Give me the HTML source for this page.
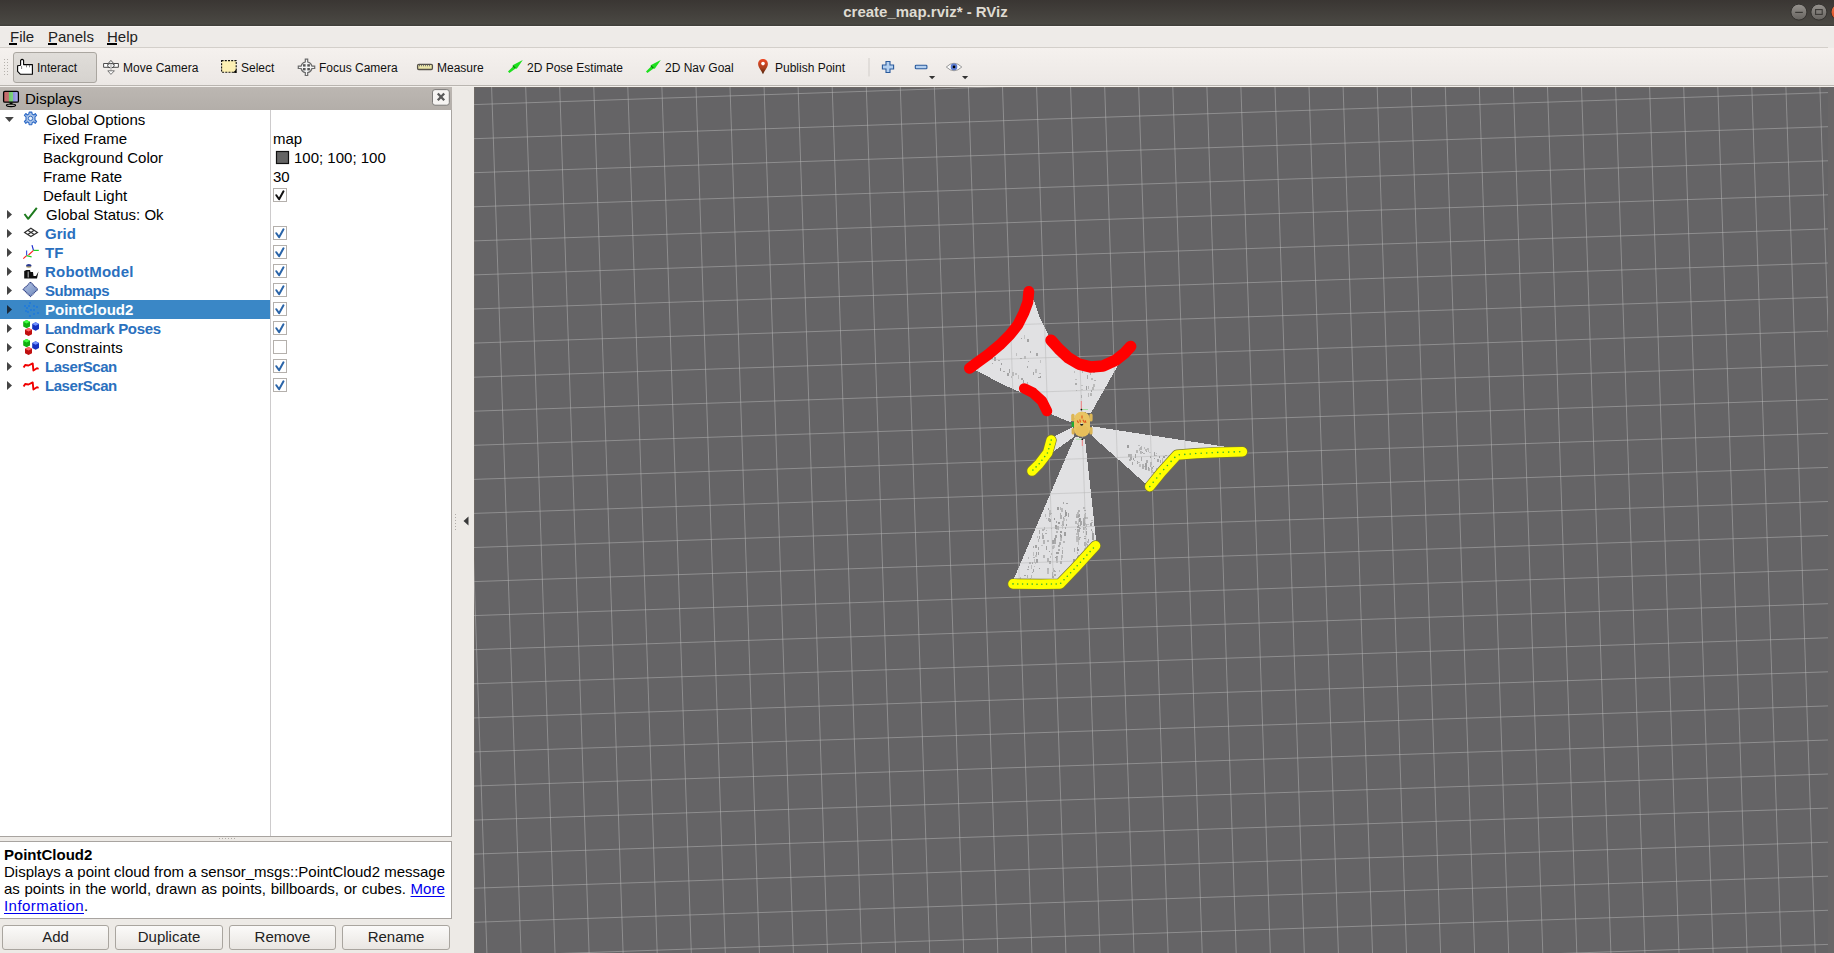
<!DOCTYPE html>
<html><head><meta charset="utf-8">
<style>
*{margin:0;padding:0;box-sizing:border-box}
html,body{width:1834px;height:953px;overflow:hidden;background:#edeae6;font-family:"Liberation Sans",sans-serif;color:#000}
.abs{position:absolute}
#title{left:0;top:0;width:1834px;height:26px;background:linear-gradient(#3a3633,#4a4843 92%,#3e3d39)}
#title .t{position:absolute;left:0;width:1851px;top:3.3px;text-align:center;font-weight:bold;font-size:15px;color:#dfdbd2}
#menubar{left:0;top:26px;width:1834px;height:22px;background:#eeebe8}
.menu{position:absolute;top:28px;font-size:15px;color:#222}
.menu u{text-decoration:none}
#toolbar{left:0;top:48px;width:1834px;height:37px;background:linear-gradient(#f5f1ee,#ece8e5)}
.tl{position:absolute;top:61px;font-size:12px;color:#111;white-space:nowrap}
#dock{left:0;top:87px;width:452px;height:866px;background:#edeae6}
#dhead{left:0;top:87px;width:452px;height:23px;background:linear-gradient(#bcb7b2,#b3aea9)}
#tree{left:0;top:110px;width:452px;height:727px;background:#fff;border-right:1px solid #a8a4a0;border-bottom:1px solid #a8a4a0}
.row{position:absolute;left:0;height:19px;font-size:15px;white-space:nowrap}
.row span{position:absolute;top:1px}
.b{font-weight:bold;color:#2a70be}
#view{left:474px;top:87px;width:1360px;height:866px;background:#656466;border-left:1.5px solid #706b67;border-top:1px solid #6d6865}
.cb{position:absolute;left:273px;width:14px;height:14px;border:1px solid #b0aca8;background:#fff}
.btn{position:absolute;top:925px;height:25px;border:1px solid #a9a59f;border-radius:3px;background:linear-gradient(#fbfaf9,#e9e6e2);font-size:15px;text-align:center;line-height:22px;color:#222}
</style></head><body>
<div id="title" class="abs"><div class="t">create_map.rviz* - RViz</div></div>
<div id="menubar" class="abs"></div><div class="abs" style="left:0;top:26px;width:1834px;height:1px;background:#f8f5f2"></div>
<div class="menu" style="left:10px"><u>F</u>ile</div>
<div class="menu" style="left:48px"><u>P</u>anels</div>
<div class="menu" style="left:107px"><u>H</u>elp</div>
<div class="abs" style="left:0;top:47px;width:1828px;height:1px;background:#d3cfca"></div>
<div class="abs" style="left:9px;top:43px;width:8px;height:2px;background:#000"></div>
<div class="abs" style="left:48px;top:43px;width:9px;height:2px;background:#000"></div>
<div class="abs" style="left:107px;top:43px;width:9.5px;height:2px;background:#000"></div>
<div id="toolbar" class="abs"></div>
<div class="abs" style="left:0;top:85px;width:1834px;height:1px;background:#b9b5b0"></div><div class="abs" style="left:0;top:86px;width:1834px;height:1px;background:#f3f0ec"></div>
<div class="abs" style="left:12.5px;top:52px;width:84.5px;height:31px;border:1px solid #aaa6a0;border-radius:3px;background:linear-gradient(#e0ddd9,#d6d3cf)"></div>
<div class="tl" style="left:37px">Interact</div>
<div class="tl" style="left:123px">Move Camera</div>
<div class="tl" style="left:241px">Select</div>
<div class="tl" style="left:319px">Focus Camera</div>
<div class="tl" style="left:437px">Measure</div>
<div class="tl" style="left:527px">2D Pose Estimate</div>
<div class="tl" style="left:665px">2D Nav Goal</div>
<div class="tl" style="left:775px">Publish Point</div>

<div id="dock" class="abs"></div>
<div id="dhead" class="abs"></div>
<div class="abs" style="left:25px;top:90px;font-size:15px">Displays</div>
<div id="tree" class="abs"></div>
<div class="abs" style="left:270px;top:110px;width:1px;height:726px;background:#cdcbcc"></div>
<div class="abs" style="left:0;top:300px;width:270px;height:19px;background:#3a87c6"></div>

<div class="row" style="top:110px"><span style="left:46px">Global Options</span></div>
<div class="row" style="top:129px"><span style="left:43px">Fixed Frame</span><span style="left:273px">map</span></div>
<div class="row" style="top:148px"><span style="left:43px">Background Color</span><span style="left:294px">100; 100; 100</span></div>
<div class="row" style="top:167px"><span style="left:43px">Frame Rate</span><span style="left:273px">30</span></div>
<div class="row" style="top:186px"><span style="left:43px">Default Light</span></div>
<div class="row" style="top:205px"><span style="left:46px">Global Status: Ok</span></div>
<div class="row" style="top:224px"><span class="b" style="left:45px">Grid</span></div>
<div class="row" style="top:243px"><span class="b" style="left:45px">TF</span></div>
<div class="row" style="top:262px"><span class="b" style="left:45px;letter-spacing:0.2px">RobotModel</span></div>
<div class="row" style="top:281px"><span class="b" style="left:45px;letter-spacing:-0.5px">Submaps</span></div>
<div class="row" style="top:300px"><span class="b" style="left:45px;color:#fff">PointCloud2</span></div>
<div class="row" style="top:319px"><span class="b" style="left:45px;letter-spacing:-0.3px">Landmark Poses</span></div>
<div class="row" style="top:338px"><span style="left:45px;letter-spacing:0.2px">Constraints</span></div>
<div class="row" style="top:357px"><span class="b" style="left:45px;letter-spacing:-0.45px">LaserScan</span></div>
<div class="row" style="top:376px"><span class="b" style="left:45px;letter-spacing:-0.45px">LaserScan</span></div>

<div class="abs" style="left:0;top:841px;width:452px;height:78px;background:#fff;border:1px solid #a8a4a0;border-left:none"></div>
<div class="abs" style="left:4px;top:846px;font-size:15px;font-weight:bold">PointCloud2</div>
<div class="abs" style="left:4px;top:863px;font-size:15px;line-height:17px;white-space:nowrap">Displays a point cloud from a sensor_msgs::PointCloud2 message<br><span style="word-spacing:0.5px">as points in the world, drawn as points, billboards, or cubes. <u style="color:#0000ee;text-underline-offset:2px">More</u></span><br><u style="color:#0000ee;text-underline-offset:2px;letter-spacing:0.45px">Information</u>.</div>

<div class="btn" style="left:2px;width:107px">Add</div>
<div class="btn" style="left:115px;width:108px">Duplicate</div>
<div class="btn" style="left:229px;width:107px">Remove</div>
<div class="btn" style="left:342px;width:108px">Rename</div>

<div id="view" class="abs"></div>
<div class="abs" style="left:1828px;top:87px;width:6px;height:866px;background:#686667"></div>
<svg class="abs" style="left:0;top:0" width="1834" height="953">
<defs><clipPath id="vc"><rect x="474" y="87" width="1354" height="866"/></clipPath></defs>
<g clip-path="url(#vc)">
<g fill="#e1e1e3" stroke="none" shape-rendering="crispEdges">
<polygon points="1081,412 1070.5,422.2 1050.7,414.1 1047,411 1024,388 1019.8,392 1000,383.2 977,370.7 969.5,368.2 976.9,362.8 987.9,354.8 999.9,344.8 1009.8,334.9 1017.8,324.9 1023.8,312.9 1027.8,302 1028.8,291.5 1033.8,300 1040,318 1046,330 1051,340.2 1058.9,349 1068.3,357.8 1079,364.1 1090.4,366.9 1103,366 1115.6,360.3 1118.7,364 1091,413"/>
<polygon points="1092,426.3 1240,449 1242.4,451.7 1218.1,452.4 1196.1,453.5 1177,455 1161.6,471.9 1149.8,486.6 1144.7,482.9 1092,436"/>
<polygon points="1073,427 1053,437 1053,452 1074,437"/>
<polygon points="1075,436.4 1014.3,577.7 1013,583.9 1040.9,584.2 1060,583.9 1075,568.2 1095.5,545.7 1096.2,540.9 1085,439"/>
</g>

<g shape-rendering="crispEdges" opacity="0.6"><rect x="1025" y="385" width="1" height="1" fill="#aeaeae"/><rect x="1011" y="376" width="1" height="1.5" fill="#a0a0a0"/><rect x="1007" y="373" width="1.5" height="3" fill="#7d7d7d"/><rect x="1003" y="371" width="1.5" height="1" fill="#868686"/><rect x="1000" y="368" width="1" height="2.5" fill="#757575"/><rect x="992" y="363" width="1" height="1" fill="#858585"/><rect x="1040" y="376" width="1" height="2" fill="#757575"/><rect x="1039" y="373" width="2" height="1" fill="#a0a0a0"/><rect x="1035" y="369" width="1.5" height="4" fill="#a5a5a5"/><rect x="1028" y="361" width="1" height="1" fill="#8b8b8b"/><rect x="1024" y="356" width="1.5" height="3" fill="#a3a3a3"/><rect x="1030" y="351" width="1" height="1.5" fill="#7e7e7e"/><rect x="1021" y="338" width="1" height="1" fill="#7e7e7e"/><rect x="1040" y="360" width="1" height="2.5" fill="#afafaf"/><rect x="1036" y="353" width="2" height="3" fill="#808080"/><rect x="1027" y="339" width="2" height="3" fill="#7a7a7a"/><rect x="1024" y="335" width="1" height="4" fill="#aeaeae"/><rect x="1027" y="382" width="1" height="1.5" fill="#949494"/><rect x="1021" y="378" width="2" height="1.5" fill="#7f7f7f"/><rect x="1018" y="375" width="1" height="4" fill="#acacac"/><rect x="1015" y="373" width="2" height="2" fill="#a5a5a5"/><rect x="1001" y="363" width="1" height="1.5" fill="#767676"/><rect x="998" y="360" width="1.5" height="1" fill="#8f8f8f"/><rect x="994" y="357" width="2" height="4" fill="#7e7e7e"/><rect x="991" y="355" width="2" height="4" fill="#818181"/><rect x="1038" y="377" width="2" height="1" fill="#7d7d7d"/><rect x="1033" y="372" width="1" height="3" fill="#7e7e7e"/><rect x="1027" y="366" width="1" height="2" fill="#858585"/><rect x="1020" y="358" width="1.5" height="1" fill="#707070"/><rect x="1016" y="353" width="1" height="2.5" fill="#aaaaaa"/><rect x="1023" y="380" width="1" height="2.5" fill="#797979"/><rect x="1012" y="372" width="1.5" height="4" fill="#9f9f9f"/><rect x="1009" y="369" width="1" height="4" fill="#808080"/><rect x="1086" y="386" width="1" height="4" fill="#767676"/><rect x="1087" y="375" width="1" height="4" fill="#888888"/><rect x="1088" y="367" width="1" height="3" fill="#929292"/><rect x="1076" y="390" width="1" height="1" fill="#949494"/><rect x="1075" y="383" width="2" height="2" fill="#898989"/><rect x="1075" y="379" width="2" height="1" fill="#a9a9a9"/><rect x="1074" y="371" width="1" height="2" fill="#aaaaaa"/><rect x="1081" y="395" width="1" height="3" fill="#888888"/><rect x="1081" y="389" width="1.5" height="1" fill="#afafaf"/><rect x="1081" y="385" width="2" height="1" fill="#acacac"/><rect x="1082" y="371" width="1" height="2" fill="#989898"/><rect x="1088" y="386" width="1" height="2.5" fill="#9d9d9d"/><rect x="1090" y="373" width="1" height="1.5" fill="#929292"/><rect x="1088" y="393" width="1" height="4" fill="#a1a1a1"/><rect x="1091" y="378" width="1.5" height="2" fill="#a3a3a3"/><rect x="1093" y="370" width="1.5" height="2.5" fill="#8c8c8c"/><rect x="1094" y="367" width="1" height="1" fill="#838383"/><rect x="1090" y="393" width="2" height="2.5" fill="#989898"/><rect x="1091" y="390" width="1" height="2" fill="#797979"/><rect x="1092" y="387" width="1.5" height="3" fill="#9d9d9d"/><rect x="1093" y="384" width="2" height="2.5" fill="#a2a2a2"/><rect x="1094" y="380" width="1.5" height="1" fill="#909090"/><rect x="1086" y="517" width="2" height="2" fill="#a7a7a7"/><rect x="1087" y="524" width="2" height="1" fill="#aaaaaa"/><rect x="1088" y="539" width="1" height="4" fill="#818181"/><rect x="1088" y="547" width="1" height="1.5" fill="#737373"/><rect x="1091" y="520" width="1.5" height="1" fill="#a2a2a2"/><rect x="1092" y="533" width="1.5" height="4" fill="#727272"/><rect x="1084" y="510" width="2" height="1" fill="#808080"/><rect x="1084" y="514" width="1.5" height="4" fill="#a7a7a7"/><rect x="1084" y="517" width="1.5" height="1.5" fill="#838383"/><rect x="1084" y="523" width="1.5" height="2" fill="#9e9e9e"/><rect x="1084" y="527" width="1.5" height="1" fill="#787878"/><rect x="1084" y="536" width="2" height="1" fill="#959595"/><rect x="1085" y="544" width="1" height="4" fill="#aaaaaa"/><rect x="1085" y="552" width="2" height="1" fill="#727272"/><rect x="1085" y="556" width="1" height="3" fill="#868686"/><rect x="1049" y="510" width="2" height="2.5" fill="#aaaaaa"/><rect x="1046" y="518" width="1" height="1" fill="#adadad"/><rect x="1042" y="529" width="2" height="2" fill="#969696"/><rect x="1039" y="536" width="1" height="2.5" fill="#828282"/><rect x="1038" y="539" width="1" height="2.5" fill="#979797"/><rect x="1035" y="545" width="2" height="2.5" fill="#7a7a7a"/><rect x="1033" y="552" width="1" height="4" fill="#a8a8a8"/><rect x="1029" y="562" width="1.5" height="2" fill="#909090"/><rect x="1028" y="566" width="1" height="1.5" fill="#8d8d8d"/><rect x="1027" y="569" width="1.5" height="1" fill="#868686"/><rect x="1024" y="575" width="2" height="1" fill="#7a7a7a"/><rect x="1051" y="513" width="1" height="1" fill="#939393"/><rect x="1049" y="519" width="1.5" height="3" fill="#777777"/><rect x="1046" y="530" width="1" height="1" fill="#9a9a9a"/><rect x="1045" y="533" width="1.5" height="1" fill="#888888"/><rect x="1043" y="540" width="2" height="4" fill="#979797"/><rect x="1041" y="545" width="2" height="1" fill="#adadad"/><rect x="1038" y="552" width="1" height="2.5" fill="#797979"/><rect x="1036" y="559" width="1.5" height="4" fill="#747474"/><rect x="1035" y="562" width="1" height="2" fill="#a3a3a3"/><rect x="1034" y="566" width="1" height="1" fill="#a1a1a1"/><rect x="1033" y="569" width="1" height="2.5" fill="#7c7c7c"/><rect x="1032" y="572" width="1" height="1" fill="#828282"/><rect x="1031" y="575" width="1" height="3" fill="#a0a0a0"/><rect x="1030" y="578" width="1" height="1.5" fill="#aeaeae"/><rect x="1083" y="507" width="2" height="1.5" fill="#9f9f9f"/><rect x="1083" y="519" width="1" height="3" fill="#828282"/><rect x="1083" y="527" width="1" height="2.5" fill="#898989"/><rect x="1083" y="531" width="1" height="1.5" fill="#9b9b9b"/><rect x="1084" y="538" width="1.5" height="1" fill="#727272"/><rect x="1084" y="550" width="2" height="2.5" fill="#8d8d8d"/><rect x="1084" y="557" width="2" height="1.5" fill="#acacac"/><rect x="1068" y="513" width="1" height="4" fill="#7e7e7e"/><rect x="1065" y="527" width="1" height="1.5" fill="#767676"/><rect x="1063" y="541" width="1.5" height="1.5" fill="#9a9a9a"/><rect x="1061" y="558" width="1" height="1.5" fill="#9d9d9d"/><rect x="1060" y="561" width="1.5" height="2.5" fill="#919191"/><rect x="1059" y="570" width="1" height="2" fill="#a7a7a7"/><rect x="1057" y="507" width="1.5" height="3" fill="#747474"/><rect x="1054" y="518" width="1" height="1.5" fill="#6e6e6e"/><rect x="1051" y="528" width="1" height="1" fill="#8b8b8b"/><rect x="1047" y="540" width="2" height="1.5" fill="#9c9c9c"/><rect x="1046" y="546" width="1" height="4" fill="#7a7a7a"/><rect x="1043" y="555" width="2" height="3" fill="#9a9a9a"/><rect x="1039" y="568" width="1" height="1" fill="#757575"/><rect x="1066" y="519" width="1" height="1.5" fill="#a7a7a7"/><rect x="1066" y="524" width="1" height="2" fill="#727272"/><rect x="1064" y="532" width="1.5" height="4" fill="#747474"/><rect x="1062" y="547" width="1" height="1.5" fill="#aeaeae"/><rect x="1062" y="550" width="1" height="4" fill="#878787"/><rect x="1061" y="555" width="1.5" height="3" fill="#9f9f9f"/><rect x="1057" y="579" width="2" height="3" fill="#898989"/><rect x="1085" y="513" width="1" height="1" fill="#808080"/><rect x="1086" y="524" width="1" height="3" fill="#9c9c9c"/><rect x="1086" y="528" width="1" height="1.5" fill="#9f9f9f"/><rect x="1086" y="531" width="1" height="4" fill="#727272"/><rect x="1087" y="541" width="2" height="2" fill="#999999"/><rect x="1087" y="544" width="1" height="4" fill="#929292"/><rect x="1065" y="510" width="1" height="2" fill="#747474"/><rect x="1063" y="518" width="1.5" height="3" fill="#adadad"/><rect x="1062" y="524" width="2" height="1.5" fill="#8b8b8b"/><rect x="1060" y="537" width="2" height="4" fill="#a1a1a1"/><rect x="1059" y="542" width="2" height="3" fill="#8f8f8f"/><rect x="1058" y="545" width="2" height="1.5" fill="#8b8b8b"/><rect x="1056" y="556" width="2" height="4" fill="#818181"/><rect x="1056" y="559" width="2" height="4" fill="#a9a9a9"/><rect x="1053" y="570" width="1.5" height="2" fill="#868686"/><rect x="1080" y="518" width="1" height="4" fill="#7b7b7b"/><rect x="1080" y="521" width="1.5" height="4" fill="#808080"/><rect x="1080" y="524" width="1" height="2" fill="#7b7b7b"/><rect x="1079" y="527" width="1" height="2.5" fill="#727272"/><rect x="1079" y="537" width="2" height="1" fill="#8e8e8e"/><rect x="1079" y="525" width="1" height="1" fill="#acacac"/><rect x="1079" y="528" width="1.5" height="1" fill="#878787"/><rect x="1078" y="541" width="1" height="4" fill="#a8a8a8"/><rect x="1078" y="555" width="1" height="1" fill="#757575"/><rect x="1078" y="562" width="1" height="1.5" fill="#8f8f8f"/><rect x="1083" y="518" width="2" height="4" fill="#868686"/><rect x="1083" y="522" width="1.5" height="4" fill="#808080"/><rect x="1084" y="542" width="2" height="4" fill="#8e8e8e"/><rect x="1084" y="544" width="1.5" height="1.5" fill="#919191"/><rect x="1084" y="548" width="2" height="3" fill="#acacac"/><rect x="1048" y="508" width="1" height="1.5" fill="#7a7a7a"/><rect x="1045" y="514" width="1" height="3" fill="#a1a1a1"/><rect x="1039" y="530" width="1" height="4" fill="#898989"/><rect x="1037" y="536" width="1" height="1.5" fill="#a3a3a3"/><rect x="1033" y="546" width="1" height="1.5" fill="#838383"/><rect x="1028" y="557" width="1" height="1.5" fill="#a3a3a3"/><rect x="1020" y="577" width="1" height="2" fill="#a3a3a3"/><rect x="1060" y="513" width="1" height="2" fill="#8e8e8e"/><rect x="1056" y="531" width="1.5" height="1.5" fill="#969696"/><rect x="1054" y="538" width="1" height="2.5" fill="#a1a1a1"/><rect x="1054" y="541" width="2" height="3" fill="#868686"/><rect x="1053" y="545" width="2" height="3" fill="#aeaeae"/><rect x="1051" y="554" width="1" height="1" fill="#a8a8a8"/><rect x="1049" y="561" width="1.5" height="1.5" fill="#6f6f6f"/><rect x="1047" y="568" width="1" height="2" fill="#a3a3a3"/><rect x="1060" y="507" width="1" height="2.5" fill="#9f9f9f"/><rect x="1056" y="521" width="1" height="1.5" fill="#7d7d7d"/><rect x="1055" y="525" width="1.5" height="4" fill="#707070"/><rect x="1052" y="540" width="1.5" height="4" fill="#787878"/><rect x="1049" y="551" width="1" height="1" fill="#727272"/><rect x="1047" y="558" width="1.5" height="4" fill="#959595"/><rect x="1078" y="515" width="1" height="3" fill="#919191"/><rect x="1078" y="524" width="1" height="3" fill="#6f6f6f"/><rect x="1077" y="532" width="2" height="3" fill="#9f9f9f"/><rect x="1077" y="537" width="1.5" height="4" fill="#a7a7a7"/><rect x="1077" y="539" width="1" height="3" fill="#a4a4a4"/><rect x="1077" y="547" width="1" height="2" fill="#808080"/><rect x="1066" y="503" width="1.5" height="1" fill="#797979"/><rect x="1063" y="517" width="1" height="1.5" fill="#868686"/><rect x="1062" y="521" width="2" height="3" fill="#9b9b9b"/><rect x="1061" y="525" width="1.5" height="1" fill="#adadad"/><rect x="1060" y="531" width="1.5" height="2" fill="#717171"/><rect x="1060" y="534" width="1" height="3" fill="#727272"/><rect x="1056" y="552" width="1.5" height="1.5" fill="#727272"/><rect x="1055" y="557" width="1" height="1" fill="#717171"/><rect x="1053" y="568" width="1" height="4" fill="#a0a0a0"/><rect x="1052" y="572" width="1" height="4" fill="#8b8b8b"/><rect x="1052" y="576" width="1.5" height="1.5" fill="#828282"/><rect x="1051" y="580" width="1.5" height="2" fill="#727272"/><rect x="1079" y="518" width="1" height="4" fill="#6e6e6e"/><rect x="1078" y="529" width="1" height="2" fill="#9f9f9f"/><rect x="1078" y="533" width="1" height="4" fill="#8c8c8c"/><rect x="1078" y="558" width="1" height="2.5" fill="#707070"/><rect x="1077" y="563" width="2" height="1" fill="#8b8b8b"/><rect x="1078" y="510" width="1.5" height="2" fill="#909090"/><rect x="1078" y="514" width="1.5" height="2.5" fill="#7b7b7b"/><rect x="1078" y="519" width="1" height="4" fill="#afafaf"/><rect x="1078" y="529" width="1.5" height="2.5" fill="#878787"/><rect x="1078" y="538" width="2" height="1.5" fill="#939393"/><rect x="1077" y="549" width="1.5" height="1.5" fill="#6e6e6e"/><rect x="1077" y="552" width="1" height="2" fill="#a2a2a2"/><rect x="1077" y="556" width="1" height="4" fill="#858585"/><rect x="1091" y="522" width="2" height="1" fill="#929292"/><rect x="1092" y="531" width="1" height="1.5" fill="#9c9c9c"/><rect x="1092" y="539" width="1" height="1" fill="#a7a7a7"/><rect x="1093" y="542" width="2" height="3" fill="#979797"/><rect x="1093" y="546" width="2" height="2.5" fill="#7b7b7b"/><rect x="1090" y="523" width="2" height="2.5" fill="#7d7d7d"/><rect x="1091" y="529" width="1" height="1.5" fill="#7f7f7f"/><rect x="1092" y="536" width="2" height="4" fill="#707070"/><rect x="1092" y="543" width="1.5" height="2" fill="#747474"/><rect x="1063" y="502" width="1" height="2" fill="#858585"/><rect x="1061" y="508" width="2" height="4" fill="#a0a0a0"/><rect x="1060" y="515" width="1.5" height="4" fill="#909090"/><rect x="1058" y="522" width="2" height="1.5" fill="#6f6f6f"/><rect x="1057" y="526" width="1.5" height="4" fill="#959595"/><rect x="1056" y="529" width="1.5" height="1" fill="#afafaf"/><rect x="1055" y="535" width="1.5" height="2.5" fill="#7e7e7e"/><rect x="1054" y="538" width="1.5" height="2.5" fill="#797979"/><rect x="1052" y="546" width="2" height="3" fill="#9c9c9c"/><rect x="1051" y="553" width="1" height="1.5" fill="#989898"/><rect x="1050" y="556" width="1" height="2" fill="#a0a0a0"/><rect x="1049" y="562" width="1.5" height="1.5" fill="#909090"/><rect x="1047" y="568" width="2" height="4" fill="#9a9a9a"/><rect x="1047" y="570" width="1.5" height="4" fill="#a6a6a6"/><rect x="1084" y="527" width="1" height="2.5" fill="#a2a2a2"/><rect x="1085" y="543" width="1.5" height="2" fill="#9b9b9b"/><rect x="1085" y="549" width="2" height="2.5" fill="#adadad"/><rect x="1049" y="513" width="2" height="2" fill="#8e8e8e"/><rect x="1044" y="527" width="1" height="3" fill="#9b9b9b"/><rect x="1042" y="533" width="1" height="2.5" fill="#8b8b8b"/><rect x="1033" y="557" width="1.5" height="1" fill="#969696"/><rect x="1027" y="575" width="1" height="3" fill="#939393"/><rect x="1065" y="512" width="1.5" height="4" fill="#6e6e6e"/><rect x="1064" y="516" width="2" height="1" fill="#949494"/><rect x="1062" y="526" width="1" height="3" fill="#afafaf"/><rect x="1061" y="535" width="1" height="3" fill="#777777"/><rect x="1058" y="549" width="1.5" height="2" fill="#8c8c8c"/><rect x="1058" y="552" width="1" height="2" fill="#7a7a7a"/><rect x="1057" y="557" width="1" height="2.5" fill="#a0a0a0"/><rect x="1056" y="559" width="1" height="1.5" fill="#8a8a8a"/><rect x="1054" y="571" width="2" height="1" fill="#8e8e8e"/><rect x="1054" y="574" width="2" height="2" fill="#8a8a8a"/><rect x="1052" y="582" width="1" height="1" fill="#9e9e9e"/><rect x="1077" y="512" width="1.5" height="2.5" fill="#9f9f9f"/><rect x="1077" y="523" width="1.5" height="2" fill="#a9a9a9"/><rect x="1077" y="526" width="1.5" height="1.5" fill="#717171"/><rect x="1077" y="529" width="1.5" height="3" fill="#878787"/><rect x="1076" y="533" width="2" height="1.5" fill="#a6a6a6"/><rect x="1076" y="536" width="2" height="4" fill="#a1a1a1"/><rect x="1076" y="540" width="1" height="1.5" fill="#aaaaaa"/><rect x="1075" y="567" width="2" height="1" fill="#909090"/><rect x="1076" y="514" width="1.5" height="1.5" fill="#9c9c9c"/><rect x="1076" y="516" width="1.5" height="1.5" fill="#8a8a8a"/><rect x="1075" y="521" width="2" height="2.5" fill="#9b9b9b"/><rect x="1075" y="529" width="1" height="1" fill="#919191"/><rect x="1074" y="548" width="1" height="4" fill="#909090"/><rect x="1073" y="559" width="1.5" height="4" fill="#737373"/><rect x="1073" y="563" width="2" height="4" fill="#8b8b8b"/><rect x="1049" y="514" width="1" height="2.5" fill="#9a9a9a"/><rect x="1048" y="518" width="1.5" height="3" fill="#8a8a8a"/><rect x="1042" y="535" width="2" height="4" fill="#888888"/><rect x="1038" y="547" width="1" height="3" fill="#828282"/><rect x="1036" y="552" width="1" height="4" fill="#797979"/><rect x="1035" y="555" width="2" height="1.5" fill="#acacac"/><rect x="1034" y="559" width="1" height="4" fill="#a6a6a6"/><rect x="1032" y="562" width="1" height="2" fill="#808080"/><rect x="1031" y="565" width="1" height="4" fill="#a4a4a4"/><rect x="1027" y="576" width="1" height="2" fill="#939393"/><rect x="1026" y="580" width="1.5" height="1.5" fill="#919191"/><rect x="1140" y="451" width="2" height="3" fill="#a6a6a6"/><rect x="1142" y="452" width="1" height="1" fill="#777777"/><rect x="1162" y="461" width="1" height="4" fill="#9b9b9b"/><rect x="1140" y="447" width="1.5" height="2.5" fill="#959595"/><rect x="1145" y="449" width="1.5" height="1.5" fill="#9d9d9d"/><rect x="1148" y="450" width="1" height="1.5" fill="#a1a1a1"/><rect x="1154" y="452" width="1" height="4" fill="#787878"/><rect x="1156" y="453" width="1" height="1" fill="#a1a1a1"/><rect x="1163" y="456" width="2" height="1.5" fill="#727272"/><rect x="1169" y="458" width="1" height="2.5" fill="#999999"/><rect x="1139" y="462" width="1" height="1" fill="#a1a1a1"/><rect x="1142" y="464" width="2" height="2" fill="#949494"/><rect x="1148" y="467" width="1" height="1.5" fill="#717171"/><rect x="1151" y="469" width="1" height="4" fill="#787878"/><rect x="1158" y="474" width="2" height="2.5" fill="#8c8c8c"/><rect x="1129" y="459" width="2" height="1.5" fill="#8e8e8e"/><rect x="1132" y="462" width="1" height="2.5" fill="#7c7c7c"/><rect x="1137" y="461" width="1" height="3" fill="#797979"/><rect x="1142" y="464" width="1" height="2" fill="#999999"/><rect x="1144" y="466" width="2" height="1" fill="#9b9b9b"/><rect x="1148" y="468" width="1.5" height="3" fill="#9b9b9b"/><rect x="1153" y="472" width="2" height="1" fill="#868686"/><rect x="1128" y="454" width="1.5" height="2.5" fill="#8e8e8e"/><rect x="1130" y="456" width="2" height="3" fill="#818181"/><rect x="1133" y="458" width="1" height="1.5" fill="#727272"/><rect x="1145" y="466" width="1.5" height="2" fill="#777777"/><rect x="1148" y="468" width="1" height="1.5" fill="#7e7e7e"/><rect x="1151" y="470" width="1.5" height="3" fill="#a9a9a9"/><rect x="1156" y="473" width="1.5" height="1.5" fill="#ababab"/><rect x="1135" y="454" width="1" height="2.5" fill="#7a7a7a"/><rect x="1141" y="457" width="1" height="4" fill="#8c8c8c"/><rect x="1146" y="460" width="1.5" height="3" fill="#8d8d8d"/><rect x="1150" y="462" width="1.5" height="2.5" fill="#999999"/><rect x="1159" y="467" width="2" height="2.5" fill="#a8a8a8"/><rect x="1135" y="456" width="1" height="2" fill="#787878"/><rect x="1150" y="465" width="1" height="1.5" fill="#8e8e8e"/><rect x="1153" y="466" width="1" height="1" fill="#707070"/><rect x="1156" y="468" width="1" height="1.5" fill="#929292"/><rect x="1158" y="470" width="1" height="1" fill="#7e7e7e"/><rect x="1127" y="445" width="2" height="2.5" fill="#717171"/><rect x="1136" y="450" width="2" height="3" fill="#989898"/><rect x="1143" y="453" width="1.5" height="1" fill="#969696"/><rect x="1150" y="456" width="1" height="1.5" fill="#707070"/><rect x="1140" y="451" width="1" height="2" fill="#919191"/><rect x="1154" y="458" width="1" height="1" fill="#7f7f7f"/><rect x="1157" y="459" width="1.5" height="3" fill="#858585"/><rect x="1160" y="460" width="1" height="3" fill="#848484"/><rect x="1138" y="445" width="1.5" height="1" fill="#a1a1a1"/><rect x="1141" y="446" width="1" height="1" fill="#9e9e9e"/><rect x="1144" y="447" width="1" height="1.5" fill="#a5a5a5"/><rect x="1147" y="448" width="1.5" height="2" fill="#a4a4a4"/><rect x="1165" y="455" width="1.5" height="1" fill="#797979"/><rect x="1139" y="448" width="1" height="2.5" fill="#a6a6a6"/><rect x="1146" y="451" width="1" height="1" fill="#7c7c7c"/><rect x="1149" y="452" width="1.5" height="1" fill="#aeaeae"/><rect x="1155" y="455" width="1.5" height="1" fill="#a0a0a0"/><rect x="1159" y="456" width="1" height="1.5" fill="#6f6f6f"/><rect x="1162" y="458" width="1" height="4" fill="#a5a5a5"/><rect x="1129" y="456" width="2" height="1" fill="#9b9b9b"/><rect x="1131" y="458" width="1" height="2" fill="#8a8a8a"/><rect x="1134" y="460" width="1" height="1" fill="#909090"/><rect x="1137" y="462" width="1.5" height="1" fill="#9c9c9c"/><rect x="1139" y="464" width="1.5" height="3" fill="#a8a8a8"/><rect x="1142" y="466" width="2" height="2.5" fill="#909090"/><rect x="1145" y="467" width="2" height="2.5" fill="#818181"/><rect x="1130" y="454" width="2" height="3" fill="#969696"/><rect x="1145" y="463" width="2" height="3" fill="#767676"/><rect x="1151" y="467" width="1.5" height="2" fill="#8a8a8a"/></g>

<g stroke="#b7b7b7" stroke-opacity="0.5" stroke-width="1" fill="none">
<line x1="423.5" y1="87" x2="452.8" y2="953"/>
<line x1="457.5" y1="87" x2="486.9" y2="953"/>
<line x1="491.6" y1="87" x2="521.0" y2="953"/>
<line x1="525.7" y1="87" x2="555.0" y2="953"/>
<line x1="559.7" y1="87" x2="589.1" y2="953"/>
<line x1="593.8" y1="87" x2="623.1" y2="953"/>
<line x1="627.8" y1="87" x2="657.2" y2="953"/>
<line x1="661.9" y1="87" x2="691.3" y2="953"/>
<line x1="696.0" y1="87" x2="725.3" y2="953"/>
<line x1="730.0" y1="87" x2="759.4" y2="953"/>
<line x1="764.1" y1="87" x2="793.4" y2="953"/>
<line x1="798.1" y1="87" x2="827.5" y2="953"/>
<line x1="832.2" y1="87" x2="861.6" y2="953"/>
<line x1="866.3" y1="87" x2="895.6" y2="953"/>
<line x1="900.3" y1="87" x2="929.7" y2="953"/>
<line x1="934.4" y1="87" x2="963.7" y2="953"/>
<line x1="968.4" y1="87" x2="997.8" y2="953"/>
<line x1="1002.5" y1="87" x2="1031.9" y2="953"/>
<line x1="1036.6" y1="87" x2="1065.9" y2="953"/>
<line x1="1070.6" y1="87" x2="1100.0" y2="953"/>
<line x1="1104.7" y1="87" x2="1134.0" y2="953"/>
<line x1="1138.7" y1="87" x2="1168.1" y2="953"/>
<line x1="1172.8" y1="87" x2="1202.2" y2="953"/>
<line x1="1206.9" y1="87" x2="1236.2" y2="953"/>
<line x1="1240.9" y1="87" x2="1270.3" y2="953"/>
<line x1="1275.0" y1="87" x2="1304.3" y2="953"/>
<line x1="1309.0" y1="87" x2="1338.4" y2="953"/>
<line x1="1343.1" y1="87" x2="1372.5" y2="953"/>
<line x1="1377.2" y1="87" x2="1406.5" y2="953"/>
<line x1="1411.2" y1="87" x2="1440.6" y2="953"/>
<line x1="1445.3" y1="87" x2="1474.6" y2="953"/>
<line x1="1479.3" y1="87" x2="1508.7" y2="953"/>
<line x1="1513.4" y1="87" x2="1542.8" y2="953"/>
<line x1="1547.5" y1="87" x2="1576.8" y2="953"/>
<line x1="1581.5" y1="87" x2="1610.9" y2="953"/>
<line x1="1615.6" y1="87" x2="1644.9" y2="953"/>
<line x1="1649.6" y1="87" x2="1679.0" y2="953"/>
<line x1="1683.7" y1="87" x2="1713.1" y2="953"/>
<line x1="1717.8" y1="87" x2="1747.1" y2="953"/>
<line x1="1751.8" y1="87" x2="1781.2" y2="953"/>
<line x1="1785.9" y1="87" x2="1815.2" y2="953"/>
<line x1="1819.9" y1="87" x2="1849.3" y2="953"/>
<line x1="1854.0" y1="87" x2="1883.4" y2="953"/>
<line x1="474" y1="36.5" x2="1828" y2="-9.6"/>
<line x1="474" y1="70.5" x2="1828" y2="24.5"/>
<line x1="474" y1="104.6" x2="1828" y2="58.6"/>
<line x1="474" y1="138.7" x2="1828" y2="92.6"/>
<line x1="474" y1="172.7" x2="1828" y2="126.7"/>
<line x1="474" y1="206.8" x2="1828" y2="160.8"/>
<line x1="474" y1="240.9" x2="1828" y2="194.8"/>
<line x1="474" y1="274.9" x2="1828" y2="228.9"/>
<line x1="474" y1="309.0" x2="1828" y2="263.0"/>
<line x1="474" y1="343.1" x2="1828" y2="297.1"/>
<line x1="474" y1="377.2" x2="1828" y2="331.1"/>
<line x1="474" y1="411.2" x2="1828" y2="365.2"/>
<line x1="474" y1="445.3" x2="1828" y2="399.3"/>
<line x1="474" y1="479.4" x2="1828" y2="433.3"/>
<line x1="474" y1="513.4" x2="1828" y2="467.4"/>
<line x1="474" y1="547.5" x2="1828" y2="501.5"/>
<line x1="474" y1="581.6" x2="1828" y2="535.5"/>
<line x1="474" y1="615.6" x2="1828" y2="569.6"/>
<line x1="474" y1="649.7" x2="1828" y2="603.7"/>
<line x1="474" y1="683.8" x2="1828" y2="637.8"/>
<line x1="474" y1="717.9" x2="1828" y2="671.8"/>
<line x1="474" y1="751.9" x2="1828" y2="705.9"/>
<line x1="474" y1="786.0" x2="1828" y2="740.0"/>
<line x1="474" y1="820.1" x2="1828" y2="774.0"/>
<line x1="474" y1="854.1" x2="1828" y2="808.1"/>
<line x1="474" y1="888.2" x2="1828" y2="842.2"/>
<line x1="474" y1="922.3" x2="1828" y2="876.2"/>
<line x1="474" y1="956.4" x2="1828" y2="910.3"/>
<line x1="474" y1="990.4" x2="1828" y2="944.4"/>
<line x1="474" y1="1024.5" x2="1828" y2="978.5"/>

</g>
<g fill="none" stroke-linecap="round" stroke-linejoin="round">
<polyline stroke="#ff0000" stroke-width="11" points="1028.8,291.5 1027.8,302 1023.8,312.9 1017.8,324.9 1009.8,334.9 999.9,344.8 987.9,354.8 976.9,362.8 969.5,368.2"/>
<polyline stroke="#ff0000" stroke-width="11.5" points="1051,340.2 1058.9,349 1068.3,357.8 1079,364.1 1090.4,366.9 1103,366 1115.6,360.3 1125,352.7 1130.7,346.4"/>
<polyline stroke="#ff0000" stroke-width="10.5" points="1024.2,388.4 1033,392.8 1041.9,400.9 1047,411.1"/>
<g stroke="#7a7a30" stroke-width="11">
<polyline points="1051.2,440.1 1047.7,452.7 1038.9,464.1 1032,471"/><polyline points="1149.8,486.6 1161.6,471.9 1177,455 1196.1,453.5 1218.1,452.4 1242.4,451.7"/><polyline points="1013,583.9 1040.9,584.2 1060,583.9 1075,568.2 1095.5,545.7"/>
</g>
<g stroke="#ffff00" stroke-width="9.6">
<polyline points="1051.2,440.1 1047.7,452.7 1038.9,464.1 1032,471"/><polyline points="1149.8,486.6 1161.6,471.9 1177,455 1196.1,453.5 1218.1,452.4 1242.4,451.7"/><polyline points="1013,583.9 1040.9,584.2 1060,583.9 1075,568.2 1095.5,545.7"/>
</g>
</g>
<g fill="#30b030"><circle cx="1051.2" cy="440.1" r="0.8"/><circle cx="1050.0" cy="444.4" r="0.8"/><circle cx="1048.8" cy="448.8" r="0.8"/><circle cx="1047.4" cy="453.0" r="0.8"/><circle cx="1044.7" cy="456.6" r="0.8"/><circle cx="1041.9" cy="460.2" r="0.8"/><circle cx="1039.2" cy="463.7" r="0.8"/><circle cx="1036.1" cy="466.9" r="0.8"/><circle cx="1032.9" cy="470.1" r="0.8"/><circle cx="1149.8" cy="486.6" r="0.8"/><circle cx="1153.2" cy="482.3" r="0.8"/><circle cx="1156.7" cy="478.0" r="0.8"/><circle cx="1160.1" cy="473.7" r="0.8"/><circle cx="1163.7" cy="469.6" r="0.8"/><circle cx="1167.4" cy="465.5" r="0.8"/><circle cx="1171.1" cy="461.4" r="0.8"/><circle cx="1174.8" cy="457.4" r="0.8"/><circle cx="1179.3" cy="454.8" r="0.8"/><circle cx="1184.8" cy="454.4" r="0.8"/><circle cx="1190.2" cy="454.0" r="0.8"/><circle cx="1195.7" cy="453.5" r="0.8"/><circle cx="1201.2" cy="453.2" r="0.8"/><circle cx="1206.7" cy="453.0" r="0.8"/><circle cx="1212.2" cy="452.7" r="0.8"/><circle cx="1217.7" cy="452.4" r="0.8"/><circle cx="1223.2" cy="452.3" r="0.8"/><circle cx="1228.7" cy="452.1" r="0.8"/><circle cx="1234.2" cy="451.9" r="0.8"/><circle cx="1239.7" cy="451.8" r="0.8"/><circle cx="1013.0" cy="583.9" r="0.8"/><circle cx="1017.8" cy="584.0" r="0.8"/><circle cx="1022.6" cy="584.0" r="0.8"/><circle cx="1027.4" cy="584.1" r="0.8"/><circle cx="1032.2" cy="584.1" r="0.8"/><circle cx="1037.0" cy="584.2" r="0.8"/><circle cx="1041.8" cy="584.2" r="0.8"/><circle cx="1046.6" cy="584.1" r="0.8"/><circle cx="1051.4" cy="584.0" r="0.8"/><circle cx="1056.2" cy="584.0" r="0.8"/><circle cx="1060.7" cy="583.2" r="0.8"/><circle cx="1064.0" cy="579.7" r="0.8"/><circle cx="1067.3" cy="576.2" r="0.8"/><circle cx="1070.6" cy="572.8" r="0.8"/><circle cx="1074.0" cy="569.3" r="0.8"/><circle cx="1077.2" cy="565.8" r="0.8"/><circle cx="1080.4" cy="562.2" r="0.8"/><circle cx="1083.7" cy="558.7" r="0.8"/><circle cx="1086.9" cy="555.1" r="0.8"/><circle cx="1090.1" cy="551.6" r="0.8"/><circle cx="1093.4" cy="548.0" r="0.8"/></g>
<g>
<rect x="1071.2" y="413.8" width="3.4" height="7.5" rx="1.6" fill="#dcb656"/>
<rect x="1089.4" y="413.5" width="3.2" height="8" rx="1.6" fill="#dcb656"/>
<rect x="1071.6" y="428" width="3" height="6.5" rx="1.5" fill="#d8b050"/>
<rect x="1089.4" y="427" width="3.2" height="7.5" rx="1.6" fill="#dcb656"/>
<rect x="1074" y="411.8" width="16" height="25" rx="7.5" fill="#e9c462"/>
<rect x="1075.5" y="426" width="13" height="10" rx="5" fill="#e6bd58" opacity="0.7"/>
<rect x="1071.6" y="422" width="2.4" height="5" fill="#22aa33"/>
<path d="M1077.3,420.5 l1.2,2.5 M1079.8,419.5 l0.6,2.8 M1082.8,419.8 l1.8,2.8 M1085.2,420.3 l0.8,2.6 M1082,415.5 v3" stroke="#e0501a" stroke-width="1.1" fill="none"/>
<ellipse cx="1081.7" cy="424.6" rx="1.6" ry="1.1" fill="#222"/>
<ellipse cx="1081.7" cy="423.6" rx="1.2" ry="0.5" fill="#fff" opacity="0.8"/>
<line x1="1081.3" y1="401" x2="1081.3" y2="409.5" stroke="#f08080" stroke-width="1"/>
<line x1="1082" y1="409.5" x2="1088" y2="409.5" stroke="#a0e0a0" stroke-width="1"/>
<circle cx="1081.4" cy="409.6" r="0.9" fill="#111"/>
<line x1="1082.3" y1="439" x2="1082.3" y2="446" stroke="#f08080" stroke-width="1"/>
<line x1="1076" y1="439.2" x2="1081.5" y2="439.2" stroke="#a0e0a0" stroke-width="1"/>
<circle cx="1082.3" cy="439.2" r="0.9" fill="#111"/>
</g>

</g>
</svg>
<svg class="abs" style="left:0;top:0;pointer-events:none" width="1834" height="953">
<defs>
<linearGradient id="gbtn" x1="0" y1="0" x2="0" y2="1"><stop offset="0" stop-color="#97938e"/><stop offset="1" stop-color="#66635f"/></linearGradient>
<linearGradient id="gcls" x1="0" y1="0" x2="0" y2="1"><stop offset="0" stop-color="#f47a52"/><stop offset="1" stop-color="#d4461a"/></linearGradient>
<linearGradient id="gpin" x1="0" y1="0" x2="0" y2="1"><stop offset="0" stop-color="#f04a26"/><stop offset="0.6" stop-color="#a8401e"/><stop offset="1" stop-color="#4a2008"/></linearGradient>
<linearGradient id="gmon" x1="0" y1="0" x2="1" y2="0"><stop offset="0" stop-color="#c86868"/><stop offset="0.33" stop-color="#c07070"/><stop offset="0.34" stop-color="#6ac86a"/><stop offset="0.64" stop-color="#80d080"/><stop offset="0.65" stop-color="#8a8ad8"/><stop offset="1" stop-color="#b0b0f0"/></linearGradient>
<linearGradient id="gsub" x1="0" y1="0" x2="1" y2="1"><stop offset="0" stop-color="#b8c8e8"/><stop offset="1" stop-color="#6a84b8"/></linearGradient>
</defs>
<!-- title bar buttons -->
<circle cx="1798.9" cy="12.1" r="8" fill="url(#gbtn)" stroke="#33312e" stroke-width="1"/>
<rect x="1795.2" y="11.8" width="7.6" height="1.2" fill="#3a3835"/>
<circle cx="1818.9" cy="12.1" r="8" fill="url(#gbtn)" stroke="#33312e" stroke-width="1"/>
<rect x="1815.6" y="9.6" width="6.6" height="4.8" fill="none" stroke="#3a3835" stroke-width="1.1"/>
<circle cx="1839" cy="12.1" r="8" fill="url(#gcls)" stroke="#33312e" stroke-width="1"/>
<!-- toolbar handle -->
<g fill="#b5b1ac">
<rect x="4" y="59" width="1" height="1"/><rect x="7" y="59" width="1" height="1"/>
<rect x="4" y="62" width="1" height="1"/><rect x="7" y="62" width="1" height="1"/>
<rect x="4" y="65" width="1" height="1"/><rect x="7" y="65" width="1" height="1"/>
<rect x="4" y="68" width="1" height="1"/><rect x="7" y="68" width="1" height="1"/>
<rect x="4" y="71" width="1" height="1"/><rect x="7" y="71" width="1" height="1"/>
<rect x="4" y="74" width="1" height="1"/><rect x="7" y="74" width="1" height="1"/>
</g>
<!-- hand -->
<path d="M20.5,74.3 L17.6,71.4 L17.6,65.8 L20.6,65.3 L20.6,60.3 Q22.1,58.4 23.6,60.3 L23.6,64.6 L32.4,64.6 L32.4,74.3 Z" fill="#fff" stroke="#000" stroke-width="1.1" stroke-linejoin="round"/>
<path d="M26.5,64.8 V67.3 M29.5,64.8 V67.3 M21.6,66 V69" stroke="#555" stroke-width="0.7"/>
<!-- move camera -->
<path d="M103.6,63.5 H118.4 V67.3 H103.6 Z" fill="#fff" stroke="#3a3a3a" stroke-width="0.9"/>
<path d="M107.6,64.2 L110.9,60.4 L114.3,64.2 Z" fill="#fff" stroke="#444" stroke-width="0.9" stroke-linejoin="round"/>
<ellipse cx="110.9" cy="65.6" rx="3.3" ry="2.3" fill="#f4f4f4" stroke="#333" stroke-width="0.9"/>
<rect x="110.2" y="64" width="1.5" height="7.5" fill="#c4c4c4"/>
<path d="M107.8,70.8 L110.9,74.4 L114.4,70.8 Z" fill="#fff" stroke="#666" stroke-width="0.9" stroke-linejoin="round"/>
<!-- select -->
<rect x="221.6" y="60.6" width="14.6" height="11.7" fill="#fdf0b4" stroke="#111" stroke-width="1.1" stroke-dasharray="2,1.2"/>
<path d="M236.5,69.2 V72.7 H233 Z" fill="#000"/>
<!-- focus camera -->
<path d="M305.3,59.2 H307.7 V62 A5.4,5.4 0 0 1 311.9,66.1 H314.7 V68.5 H311.9 A5.4,5.4 0 0 1 307.7,72.6 V75.5 H305.3 V72.6 A5.4,5.4 0 0 1 301.1,68.5 H298.3 V66.1 H301.1 A5.4,5.4 0 0 1 305.3,62 Z" fill="#f4f4f4" stroke="#6a6a6a" stroke-width="1.2"/>
<g fill="#555"><rect x="303" y="64.2" width="2.6" height="2.4"/><rect x="307.3" y="64.2" width="2.6" height="2.4"/><rect x="303" y="68" width="2.6" height="2.4"/><rect x="307.3" y="68" width="2.6" height="2.4"/></g>
<!-- measure -->
<rect x="417.6" y="64.3" width="14.8" height="5.2" rx="1.2" fill="#ebe6a8" stroke="#555048" stroke-width="1.3"/>
<path d="M419.5,64.8 V66.3 M421.5,64.8 V66.3 M423.5,64.8 V66.3 M425.5,64.8 V66.3 M427.5,64.8 V66.3 M429.5,64.8 V66.3" stroke="#6a6a70" stroke-width="0.9"/>
<!-- green arrows -->
<g fill="#1ee01e">
<path d="M508,71.5 L513,66.4 L512.6,65.2 L522.8,60 L516.8,68.8 L515.6,68.4 L509.4,73 Z"/>
<path d="M646,71.5 L651,66.4 L650.6,65.2 L660.8,60 L654.8,68.8 L653.6,68.4 L647.4,73 Z"/>
</g>
<path d="M513,65.8 l2.4,2.4" stroke="#0a7a0a" stroke-width="1.2"/>
<path d="M651,65.8 l2.4,2.4" stroke="#0a7a0a" stroke-width="1.2"/>
<!-- pin -->
<path d="M763,59 C759.9,59 758.1,61.3 758.1,64 C758.1,67.5 761.5,70.5 763,74.3 C764.5,70.5 767.9,67.5 767.9,64 C767.9,61.3 766.1,59 763,59 Z" fill="url(#gpin)"/>
<circle cx="763" cy="63.6" r="1.8" fill="#fff"/>
<!-- separator -->
<rect x="868.5" y="58" width="1" height="18.5" fill="#d2cec9"/>
<!-- plus -->
<path d="M886,61.5 H890 V65 H893.6 V69 H890 V72.5 H886 V69 H882.4 V65 H886 Z" fill="#b4d0f0" stroke="#2a5a9c" stroke-width="1.1"/>
<!-- minus -->
<rect x="915.3" y="65.3" width="11.6" height="3.4" rx="0.8" fill="#b4d0f0" stroke="#2a5a9c" stroke-width="1.1"/>
<path d="M929,76 H935.2 L932.1,79.2 Z" fill="#333"/>
<!-- eye -->
<path d="M946.3,67 Q954,59.5 961.8,67 Q954,74.5 946.3,67 Z" fill="#fafafa" stroke="#8c8c8c" stroke-width="0.9"/>
<circle cx="954" cy="66.9" r="3.3" fill="#5a7ad0"/>
<circle cx="954" cy="66.9" r="1.3" fill="#000"/>
<path d="M962,76 H968.2 L965.1,79.2 Z" fill="#333"/>
<!-- displays icon -->
<rect x="3.6" y="91.4" width="14.8" height="10.8" rx="1.3" fill="url(#gmon)" stroke="#000" stroke-width="1.3"/>
<rect x="9.7" y="102.5" width="2.8" height="1.8" fill="#000"/>
<ellipse cx="11" cy="105.3" rx="4.6" ry="1.3" fill="none" stroke="#000" stroke-width="1.1"/>
<!-- dock close button -->
<rect x="432.5" y="89.6" width="16.8" height="15.6" rx="2.5" fill="#f6f4f2" stroke="#7c7a78" stroke-width="1"/>
<path d="M437.8,93.5 L444.2,100.2 M444.2,93.5 L437.8,100.2" stroke="#5a5a5a" stroke-width="2.3"/>
<!-- tree arrows -->
<path d="M5,117 H13.8 L9.4,122 Z" fill="#444"/>
<g fill="#444">
<path d="M7,210 V219 L12,214.5 Z"/>
<path d="M7,229 V238 L12,233.5 Z"/>
<path d="M7,248 V257 L12,252.5 Z"/>
<path d="M7,267 V276 L12,271.5 Z"/>
<path d="M7,286 V295 L12,290.5 Z"/>
<path d="M7,305 V314 L12,309.5 Z" fill="#1a2a3a"/>
<path d="M7,324 V333 L12,328.5 Z"/>
<path d="M7,343 V352 L12,347.5 Z"/>
<path d="M7,362 V371 L12,366.5 Z"/>
<path d="M7,381 V390 L12,385.5 Z"/>
</g>
<!-- gear -->
<g transform="translate(30.5,118.4)">
<path d="M-1.3,-6.3 H1.3 L1.7,-4.3 L3.3,-3.4 L4.9,-4.7 L4.7,-4.9 L6.1,-3.1 L4.5,-1.6 L4.5,1.6 L6.1,3.1 L4.7,4.9 L3.3,3.4 L1.7,4.3 L1.3,6.3 H-1.3 L-1.7,4.3 L-3.3,3.4 L-4.7,4.9 L-6.1,3.1 L-4.5,1.6 L-4.5,-1.6 L-6.1,-3.1 L-4.7,-4.9 L-3.3,-3.4 L-1.7,-4.3 Z" fill="#a9c3e8" stroke="#2e6ac6" stroke-width="1.1" stroke-linejoin="round"/>
<circle r="2.2" fill="#e8f0fa" stroke="#3a70c0" stroke-width="1"/>
</g>
<!-- green check -->
<path d="M24.5,214 L28.2,218.8 L36.8,207.8" fill="none" stroke="#1e7a1e" stroke-width="2" stroke-linejoin="round"/>
<!-- grid icon -->
<g fill="none" stroke="#303030" stroke-width="1.2">
<path d="M24.6,232.4 L30.9,228.2 L37.5,232.4 L30.9,236.6 Z"/>
<path d="M27.75,230.3 L34.2,234.5 M34.2,230.3 L27.75,234.5"/>
</g>
<!-- TF -->
<g stroke-width="1.2" fill="none">
<path d="M23.3,258.6 L26.6,255.6" stroke="#ff2020"/>
<path d="M26.6,255.6 V250.4" stroke="#4050e0"/>
<path d="M26.6,255.6 L31.6,256.8" stroke="#20d020"/>
<path d="M28.5,255 L33.5,250.4" stroke="#ff2020"/>
<path d="M33.5,250.4 L32,245.2" stroke="#2030d0"/>
<path d="M33.5,250.4 H38.8" stroke="#20d020"/>
</g>
<!-- robot model -->
<ellipse cx="28.8" cy="265.8" rx="2.8" ry="1.8" fill="#2a3a90"/>
<rect x="26.5" y="266.5" width="4.5" height="1" fill="#d8c060"/>
<path d="M24.2,278.6 V271 L26.5,270 H30 L30.5,272 L33,272 L33.5,276 L36,276 L38.5,271.5 L37,278.6 Z" fill="#111"/>
<rect x="27.5" y="271.5" width="1.5" height="6" fill="#888"/>
<!-- submaps -->
<path d="M30.5,282.2 L37.8,289.4 L30.5,296.6 L23.2,289.4 Z" fill="url(#gsub)" stroke="#2a3a80" stroke-width="1.1" stroke-dasharray="1.2,0.6"/>
<!-- pointcloud dots -->
<g fill="#1a78e0">
<circle cx="30" cy="303" r="0.9"/><circle cx="25" cy="306" r="0.9"/><circle cx="29" cy="306" r="0.9"/><circle cx="34" cy="306" r="0.9"/><circle cx="37" cy="307" r="0.9"/>
<circle cx="27" cy="308" r="0.9"/><circle cx="31" cy="310" r="0.9"/><circle cx="34" cy="310" r="0.9"/><circle cx="26" cy="311" r="0.9"/><circle cx="28" cy="312" r="0.9"/>
<circle cx="38" cy="313" r="0.9"/><circle cx="34" cy="314" r="0.9"/><circle cx="30" cy="316" r="0.9"/>
</g>
<!-- cubes icons -->
<g id="cubes">
<path d="M26.6,320 L30,321.7 L30,326.5 L26.6,328.2 L23.2,326.5 L23.2,321.7 Z" fill="#10b010"/>
<path d="M26.6,320 L30,321.7 L26.6,323.4 L23.2,321.7 Z" fill="#40ff40"/>
<path d="M35.6,322.3 L39,324 L39,329 L35.6,330.7 L32.2,329 L32.2,324 Z" fill="#1530c0"/>
<path d="M35.6,322.3 L39,324 L35.6,325.7 L32.2,324 Z" fill="#7090ff"/>
<path d="M28.5,328 L32,329.7 L32,334.3 L28.5,336 L25,334.3 L25,329.7 Z" fill="#c01010"/>
<path d="M28.5,328 L32,329.7 L28.5,331.4 L25,329.7 Z" fill="#ff6a6a"/>
</g>
<use href="#cubes" y="19"/>
<!-- laser scans -->
<g fill="none" stroke="#f00000" stroke-width="1.9" stroke-linejoin="round">
<path d="M23.6,367.6 L25.2,365 L28.5,365.5 L32.7,363.4 L33.4,370.5 L36.9,368.2 L38.6,368.8"/>
<path d="M23.6,386.6 L25.2,384 L28.5,384.5 L32.7,382.4 L33.4,389.5 L36.9,387.2 L38.6,387.8"/>
</g>
<!-- checkboxes -->
<g fill="#fff" stroke="#b4b0ac" stroke-width="1">
<rect x="273.5" y="188.5" width="13" height="13"/>
<rect x="273.5" y="226.5" width="13" height="13"/>
<rect x="273.5" y="245.5" width="13" height="13"/>
<rect x="273.5" y="264.5" width="13" height="13"/>
<rect x="273.5" y="283.5" width="13" height="13"/>
<rect x="273.5" y="302.5" width="13" height="13"/>
<rect x="273.5" y="321.5" width="13" height="13"/>
<rect x="273.5" y="340.5" width="13" height="13"/>
<rect x="273.5" y="359.5" width="13" height="13"/>
<rect x="273.5" y="378.5" width="13" height="13"/>
</g>
<g fill="none" stroke-width="2" stroke-linecap="round" stroke-linejoin="round">
<path d="M276.3,195.2 L279.1,199.3 L283.5,191.3" stroke="#111"/>
<path d="M276.3,233.2 L279.1,237.3 L283.5,229.3" stroke="#2a64a8"/>
<path d="M276.3,252.2 L279.1,256.3 L283.5,248.3" stroke="#2a64a8"/>
<path d="M276.3,271.2 L279.1,275.3 L283.5,267.3" stroke="#2a64a8"/>
<path d="M276.3,290.2 L279.1,294.3 L283.5,286.3" stroke="#2a64a8"/>
<path d="M276.3,309.2 L279.1,313.3 L283.5,305.3" stroke="#2a64a8"/>
<path d="M276.3,328.2 L279.1,332.3 L283.5,324.3" stroke="#2a64a8"/>
<path d="M276.3,366.2 L279.1,370.3 L283.5,362.3" stroke="#2a64a8"/>
<path d="M276.3,385.2 L279.1,389.3 L283.5,381.3" stroke="#2a64a8"/>
</g>
<!-- color swatch -->
<rect x="276.5" y="151.5" width="12" height="12" fill="#646464" stroke="#111" stroke-width="1.2"/>
<!-- splitter arrow & dots -->
<path d="M468.5,516.5 V525.5 L463.5,521 Z" fill="#3a3a3a"/>
<g fill="#b0aca8"><rect x="455" y="514" width="1" height="1"/><rect x="455" y="517" width="1" height="1"/><rect x="455" y="520" width="1" height="1"/><rect x="455" y="523" width="1" height="1"/><rect x="455" y="526" width="1" height="1"/><rect x="455" y="529" width="1" height="1"/></g>
<g fill="#b0aca8"><rect x="219" y="838" width="1" height="1"/><rect x="222" y="838" width="1" height="1"/><rect x="225" y="838" width="1" height="1"/><rect x="228" y="838" width="1" height="1"/><rect x="231" y="838" width="1" height="1"/><rect x="234" y="838" width="1" height="1"/></g>
</svg>

</body></html>
